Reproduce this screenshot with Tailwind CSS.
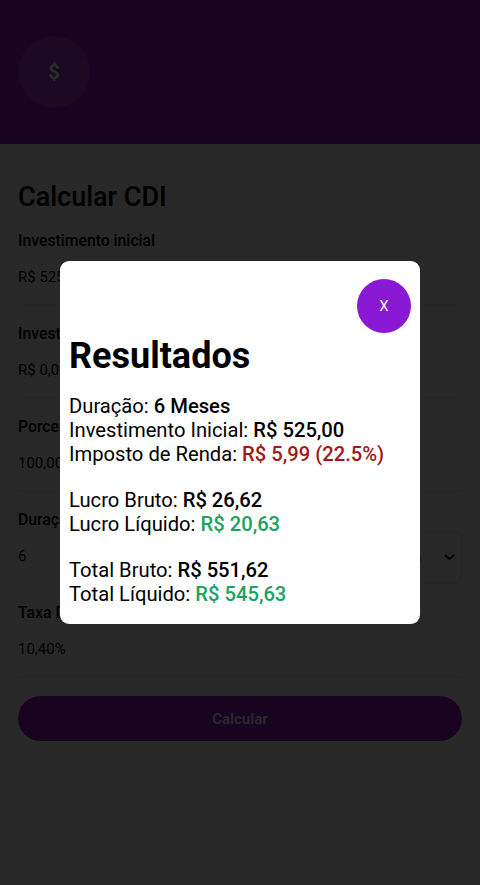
<!DOCTYPE html>
<html lang="pt-BR"><head><meta charset="utf-8"><title>Calcular CDI</title>
<script src="https://cdn.jsdelivr.net/npm/@tailwindcss/browser@4"></script></head>
<body class="h-[885px] overflow-hidden bg-[#282828] font-['Roboto',sans-serif] text-black">
<header class="h-36 bg-[#180320] px-[18px] pt-9"><div class="flex size-[72px] items-center justify-center rounded-full bg-[#1a0920] text-[20.25px] font-bold text-[#282d28]">$</div></header>
<main class="px-[18px] pt-[36px]">
<h1 class="h-[51px] text-[27px] font-medium leading-[34px]">Calcular CDI</h1>
<div class="h-[93px]"><label class="block text-[15.75px] leading-[19px] font-medium">Investimento inicial</label><div class="mt-[9px] h-[47px] border-b-2 border-[#262626] text-[15px] leading-[36px]">R$ 525,00</div></div>
<div class="h-[93px]"><label class="block text-[15.75px] leading-[19px] font-medium">Investimento</label><div class="mt-[9px] h-[47px] border-b-2 border-[#262626] text-[15px] leading-[36px]">R$ 0,00</div></div>
<div class="h-[93px]"><label class="block text-[15.75px] leading-[19px] font-medium">Porcentagem</label><div class="mt-[9px] h-[47px] border-b-2 border-[#262626] text-[15px] leading-[36px]">100,00</div></div>
<div class="h-[93px]"><label class="block text-[15.75px] leading-[19px] font-medium">Duração</label><div class="flex"><div class="mt-[9px] h-[47px] flex-1 border-b-2 border-[#262626] text-[15px] leading-[36px]">6</div><div class="mt-px flex h-[54px] w-[90px] items-center justify-between rounded-[9px] border-2 border-[#262626] pl-[3px] pr-[5px] text-[15px]">Meses<svg class="mt-px h-[7px] w-[11px] shrink-0" viewBox="0 0 11 7" fill="none" stroke="black" stroke-width="2"><path d="m1 1 4.5 4L10 1"/></svg></div></div></div>
<div class="h-[93px]"><label class="block text-[15.75px] leading-[19px] font-medium">Taxa DI</label><div class="mt-[9px] h-[47px] border-b-2 border-[#262626] text-[15px] leading-[36px]">10,40%</div></div>
<button class="block h-[45px] w-full rounded-full bg-[#180320] pt-px text-[15px] font-bold text-[#282828]">Calcular</button>
</main>
<section class="absolute left-[60px] top-[261px] h-[363px] w-[360px] rounded-[9px] bg-white px-[9px] pt-[18px]">
<button class="ml-auto block size-[54px] rounded-full bg-[#8a19d4] pt-px text-[15px] text-white">X</button>
<h2 class="pt-[2px] text-[36px] font-bold leading-[43px]">Resultados</h2>
<div class="mt-[16px] text-[20.2px] leading-6"><p>Duração: <b class="font-medium">6 Meses</b></p><p>Investimento Inicial: <b class="font-medium">R$ 525,00</b></p><p>Imposto de Renda: <b class="font-medium text-[#a01818]">R$ 5,99 (22.5%)</b></p>
<p class="mt-[22px]">Lucro Bruto: <b class="font-medium">R$ 26,62</b></p><p>Lucro Líquido: <b class="font-medium text-[#1ba35f]">R$ 20,63</b></p>
<p class="mt-[22px]">Total Bruto: <b class="font-medium">R$ 551,62</b></p><p>Total Líquido: <b class="font-medium text-[#1ba35f]">R$ 545,63</b></p></div>
</section></body></html>
